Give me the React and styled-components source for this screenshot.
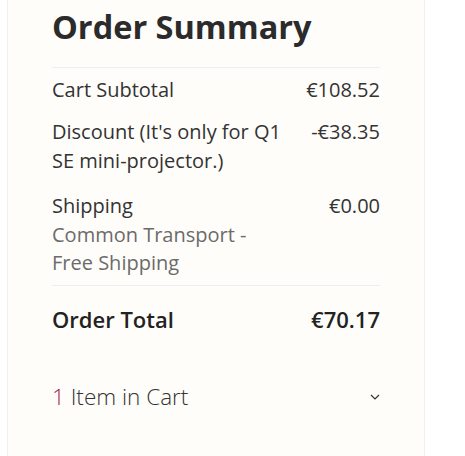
import React from 'react';
import styled, { createGlobalStyle } from 'styled-components';

const GlobalStyle = createGlobalStyle`
  html, body {
    margin: 0;
    padding: 0;
    background: #ffffff;
  }
  body {
    font-family: 'Open Sans', 'Noto Sans', sans-serif;
    color: #333333;
  }
`;

const Page = styled.div`
  padding-left: 7px;
  width: 418px;
`;

const Summary = styled.aside`
  box-sizing: border-box;
  min-height: 456px;
  padding: 7px 44px 0 44px;
  background: #fffdfa;
  border-left: 1px solid #eef0f4;
  border-right: 1px solid #eef0f4;
`;

const Title = styled.h2`
  margin: 0 0 21px;
  font-size: 32.5px;
  line-height: 1.2;
  font-weight: 700;
  color: #2b2b2b;
`;

const Totals = styled.div`
  border-top: 1px solid #eceef2;
  padding-top: 0.5px;
`;

const Row = styled.div`
  display: flex;
  justify-content: space-between;
  align-items: flex-start;
  gap: 20px;
  padding: ${p => (p.$spaced ? '10px' : '7px')} 0 7px;
  font-size: 20px;
  line-height: 28.5px;
`;

const Label = styled.div`
  max-width: 232px;
`;

const Note = styled.div`
  color: #6b6b6b;
`;

const Amount = styled.div`
  white-space: nowrap;
  text-align: right;
`;

const GrandTotal = styled.div`
  display: flex;
  justify-content: space-between;
  align-items: baseline;
  border-top: 1px solid #eceef2;
  padding: 18px 0 0;
  font-size: 22px;
  line-height: 30px;
  font-weight: 600;
  color: #222222;
`;

const CartToggle = styled.button`
  display: flex;
  justify-content: space-between;
  align-items: center;
  width: 100%;
  margin-top: 48px;
  padding: 0;
  border: 0;
  background: none;
  font-family: inherit;
  font-size: 22.5px;
  line-height: 30px;
  font-weight: 300;
  color: #333333;
  cursor: pointer;
  text-align: left;
`;

const Count = styled.span`
  color: #a3264f;
`;

const Chevron = () => (
  <svg width="10" height="6" viewBox="0 0 10 6" fill="none">
    <path d="M1 1l4 4 4-4" stroke="#333" strokeWidth="1.2" />
  </svg>
);

export default function App() {
  return (
    <Page>
      <GlobalStyle />
      <Summary>
        <Title>Order Summary</Title>
        <Totals>
          <Row>
            <Label>Cart Subtotal</Label>
            <Amount>€108.52</Amount>
          </Row>
          <Row>
            <Label>Discount (It's only for Q1 SE mini-projector.)</Label>
            <Amount>-€38.35</Amount>
          </Row>
          <Row $spaced>
            <Label>
              Shipping
              <Note>Common Transport - Free Shipping</Note>
            </Label>
            <Amount>€0.00</Amount>
          </Row>
        </Totals>
        <GrandTotal>
          <span>Order Total</span>
          <span>€70.17</span>
        </GrandTotal>
        <CartToggle>
          <span>
            <Count>1</Count> Item in Cart
          </span>
          <Chevron />
        </CartToggle>
      </Summary>
    </Page>
  );
}
